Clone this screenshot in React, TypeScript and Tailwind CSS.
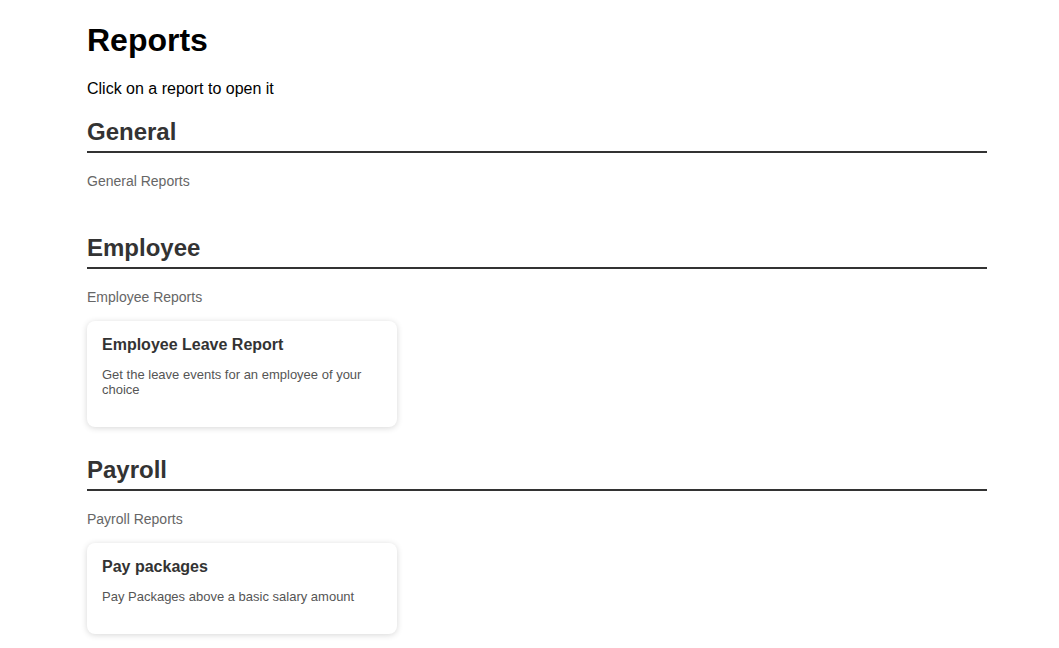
import React from "react"

type Report = { title: string; description: string }
type Section = { name: string; description: string; reports: Report[] }

const SECTIONS: Section[] = [
  { name: "General", description: "General Reports", reports: [] },
  {
    name: "Employee",
    description: "Employee Reports",
    reports: [
      {
        title: "Employee Leave Report",
        description: "Get the leave events for an employee of your choice",
      },
    ],
  },
  {
    name: "Payroll",
    description: "Payroll Reports",
    reports: [
      {
        title: "Pay packages",
        description: "Pay Packages above a basic salary amount",
      },
    ],
  },
]

function ReportCard({ report }: { report: Report }) {
  return (
    <div className="w-[310px] rounded-[8px] bg-white px-[15px] pt-[15px] pb-[30px] shadow-[0_1px_6px_rgba(0,0,0,0.16)] cursor-pointer">
      <h3 className="text-[16px] leading-[18px] font-bold text-[#333]">{report.title}</h3>
      <p className="mt-[13px] text-[13px] leading-[15px] text-[#555]">{report.description}</p>
    </div>
  )
}

export default function App() {
  return (
    <div className="min-h-screen bg-white font-['Liberation_Sans',Arial,sans-serif]">
      <div className="ml-[87px] w-[900px] pt-[22px]">
        <h1 className="text-[32px] leading-[37px] font-bold text-black">Reports</h1>
        <p className="mt-[21px] text-[16px] leading-[18px] text-black">Click on a report to open it</p>

        {SECTIONS.map((section, i) => (
          <section key={section.name} className={i === 0 ? "mt-[20px]" : "mt-[29px]"}>
            <h2 className="border-b-2 border-[#333] pb-[5px] text-[24px] leading-[28px] font-bold text-[#333]">
              {section.name}
            </h2>
            <p className="mt-[20px] text-[14px] leading-[16px] text-[#666]">{section.description}</p>
            <div className="mt-[16px] flex flex-wrap gap-[15px]">
              {section.reports.map((r) => (
                <ReportCard key={r.title} report={r} />
              ))}
            </div>
          </section>
        ))}
      </div>
    </div>
  )
}
